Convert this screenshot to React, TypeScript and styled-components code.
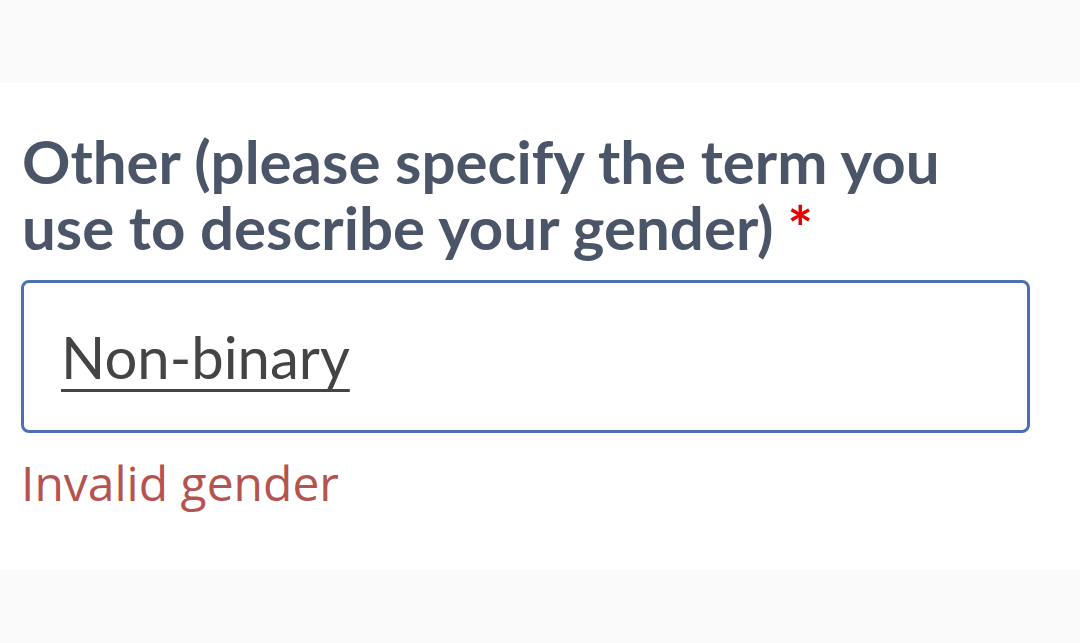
import React from 'react';
import styled, {createGlobalStyle} from 'styled-components';

const GlobalStyle = createGlobalStyle`
  html, body {
    margin: 0;
    padding: 0;
    background: #fafafa;
  }
`;

const Page = styled.div`
  width: 1080px;
  height: 643px;
  display: flex;
  flex-direction: column;
  background: #fafafa;
`;

const Band = styled.div`
  height: 83px;
  background: #fafafa;
`;

const Card = styled.div`
  background: #ffffff;
  height: 487px;
  padding: 45px 50px 0 21px;
  box-sizing: border-box;
  display: flex;
  flex-direction: column;
`;

const Label = styled.label`
  font-family: Lato, 'Noto Sans', sans-serif;
  font-weight: 700;
  font-size: 60px;
  line-height: 66px;
  color: #4a5568;
  padding-left: 1px;
`;

const Required = styled.span`
  color: #e60000;
  margin-left: 14px;
`;

const Field = styled.div`
  margin-top: 20px;
  height: 153px;
  border: 3px solid #4d70b3;
  border-radius: 8px;
  box-sizing: border-box;
  display: flex;
  align-items: center;
  padding-left: 37px;
`;

const Value = styled.span`
  font-family: Lato, 'Noto Sans', sans-serif;
  font-size: 58px;
  color: #444;
  text-decoration: underline;
  text-decoration-thickness: 3px;
  text-underline-offset: 10px;
`;

const Error = styled.div`
  margin-top: 20px;
  font-family: 'Open Sans', sans-serif;
  font-size: 48px;
  line-height: 60px;
  color: #b5544f;
`;

const App: React.FC = () => {
  return (
    <>
      <GlobalStyle />
      <Page>
        <Band />
        <Card>
          <Label>
            Other (please specify the term you use to describe your gender)
            <Required>*</Required>
          </Label>
          <Field>
            <Value>Non-binary</Value>
          </Field>
          <Error>Invalid gender</Error>
        </Card>
      </Page>
    </>
  );
};

export default App;
